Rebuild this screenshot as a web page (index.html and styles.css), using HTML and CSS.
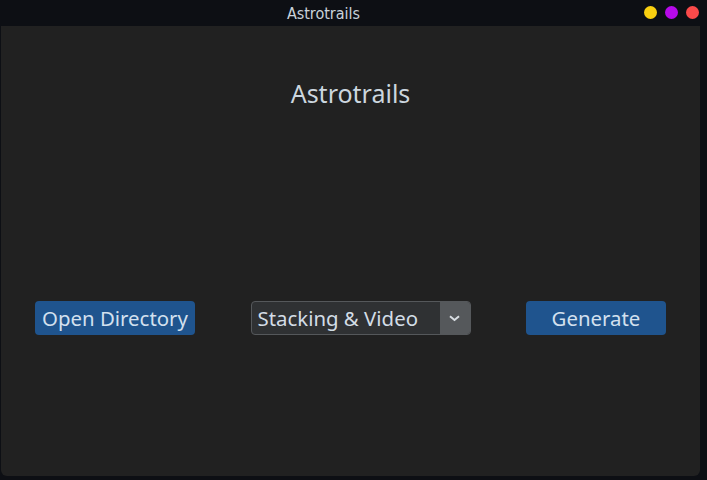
FILE: index.html
```html
<!DOCTYPE html>
<html>
<head>
<meta charset="utf-8">
<link rel="stylesheet" href="styles.css">
</head>
<body>
<div class="window">
  <div class="titlebar">
    <div class="title">Astrotrails</div>
    <div class="controls">
      <span class="dot yellow"></span>
      <span class="dot purple"></span>
      <span class="dot red"></span>
    </div>
  </div>
  <div class="panel">
    <h1 class="heading">Astrotrails</h1>
    <div class="row">
      <button class="btn open">Open Directory</button>
      <div class="combo">
        <span class="combo-text">Stacking &amp; Video</span>
        <span class="combo-arrow">
          <svg width="11" height="7" viewBox="0 0 11 7"><path d="M1 1.2 L5.5 5 L10 1.2" fill="none" stroke="#d8dde2" stroke-width="2"/></svg>
        </span>
      </div>
      <button class="btn gen">Generate</button>
    </div>
  </div>
</div>
</body>
</html>
```
FILE: styles.css
```css
html, body {
  margin: 0;
  padding: 0;
  background: #0d0f14;
}
.window {
  width: 707px;
  height: 480px;
  display: flex;
  flex-direction: column;
  background: #0d0f14;
  box-sizing: border-box;
}
.titlebar {
  height: 26px;
  display: flex;
  align-items: center;
  justify-content: center;
  position: relative;
}
.title {
  font-family: "DejaVu Sans Condensed", "DejaVu Sans", sans-serif;
  font-stretch: condensed;
  font-size: 16px;
  color: #c9d2da;
  transform: translateX(-30px);
}
.controls {
  position: absolute;
  right: 8px;
  top: 6px;
  display: flex;
  gap: 8px;
}
.dot {
  width: 13px;
  height: 13px;
  border-radius: 50%;
  display: block;
}
.yellow { background: #f9cf10; }
.purple { background: #b70aea; }
.red { background: #fb4a4a; }
.panel {
  margin: 0 7px 4px 1px;
  flex: 1;
  background: #212121;
  border-radius: 0 0 6px 6px;
  display: flex;
  flex-direction: column;
  align-items: center;
}
.heading {
  margin: 52px 0 0 0;
  font-family: "Noto Sans", sans-serif;
  font-weight: normal;
  font-size: 25px;
  color: #ccd6df;
  line-height: 30px;
}
.row {
  margin-top: 193px;
  width: 100%;
  box-sizing: border-box;
  padding: 0 34px 0 34px;
  display: flex;
  justify-content: space-between;
  align-items: center;
}
.btn {
  height: 34px;
  border: none;
  border-radius: 4px;
  background: #1f548e;
  color: #d3e0ee;
  font-family: "Noto Sans", sans-serif;
  font-size: 20.4px;
  padding: 0;
  line-height: 34px;
}
.open { width: 160px; }
.gen { width: 140px; }
.combo {
  width: 220px;
  height: 34px;
  box-sizing: border-box;
  border: 1px solid #55585b;
  border-radius: 4px;
  background: #2f3133;
  display: flex;
  overflow: hidden;
}
.combo-text {
  flex: 1;
  font-family: "Noto Sans", sans-serif;
  font-size: 20.4px;
  color: #d3dde6;
  line-height: 32px;
  padding-left: 6px;
}
.combo-arrow {
  width: 30px;
  background: #55585b;
  display: flex;
  align-items: center;
  justify-content: center;
}
```
